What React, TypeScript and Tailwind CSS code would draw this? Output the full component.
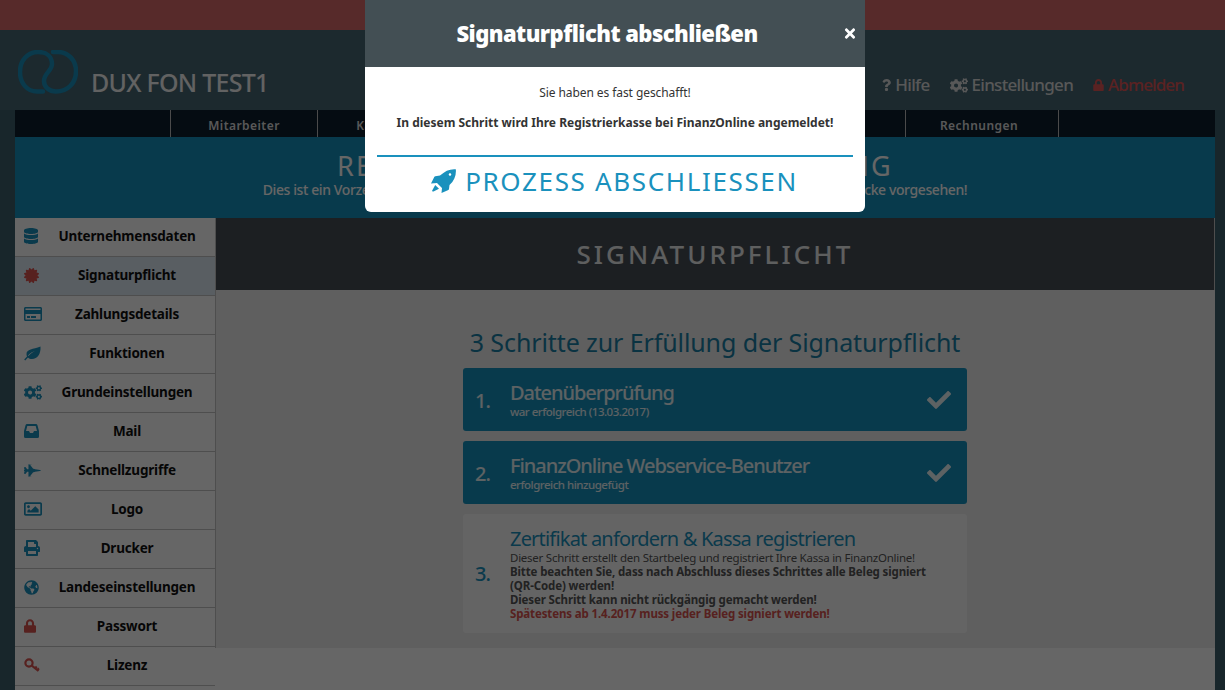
import React from 'react';
import {
  FaCertificate, FaCheck, FaCogs, FaDatabase, FaFighterJet, FaGlobeAmericas, FaLock, FaPrint, FaQuestion,
  FaRegCreditCard, FaRegImage, FaTimes,
} from 'react-icons/fa';

const KeyIcon = ({ className }: { className?: string }) => (
  <svg viewBox="0 0 16 15" className={className} fill="none" stroke="currentColor">
    <circle cx="5" cy="5" r="3.6" strokeWidth="2.2" />
    <path d="M7.8 7.6 L14.5 13 M11 10.2 L12.8 8.6 M13.2 12 L15 10.4" strokeWidth="2.2" />
  </svg>
);

const LeafIcon = ({ className }: { className?: string }) => (
  <svg viewBox="0 0 17 15" className={className} fill="currentColor" fillRule="evenodd">
    <path d="M16.5 .5 C17 8 13.5 13 8 13 C6.3 13 5 12.5 4 11.5 L1.2 14.6 L.2 13.6 L3 10.5 C2.6 9.5 2.5 9 2.5 8 C2.5 3 9 3.5 16.5 .5 Z M4.5 10 C7 7 9.5 5.5 13 4.5 C9.5 5 6 7 4 9.5 Z" />
  </svg>
);

const InboxIcon = ({ className }: { className?: string }) => (
  <svg viewBox="0 0 15 14" className={className} fill="currentColor" fillRule="evenodd">
    <path d="M3 0 H12 Q13 0 13.4 1 L15 7 V12.5 Q15 14 13.5 14 H1.5 Q0 14 0 12.5 V7 L1.6 1 Q2 0 3 0 Z M3.3 2 L2 7 H5 L6 9 H9 L10 7 H13 L11.7 2 Z" />
  </svg>
);

const RocketIcon = ({ className }: { className?: string }) => (
  <svg viewBox="0 0 25 24" className={className} fill="currentColor" fillRule="evenodd">
    <path d="M24.8 .2 C25.4 6 23.5 11.5 18.5 16 L18 20 Q17.9 20.6 17.4 20.9 L10.5 24 L11 19 L6 14 L0 14.5 L3.4 7.8 Q3.7 7.2 4.3 7.2 L9 6.6 C14 1.8 19 -.3 24.8 .2 Z M19 4.2 A1.3 1.3 0 1 0 19 6.8 A1.3 1.3 0 1 0 19 4.2 Z" />
    <path d="M4.2 16 L8 19.8 L2.5 22.5 Q.6 23 1.4 21.2 Z" />
  </svg>
);

const sidebar = [
  { label: 'Unternehmensdaten', icon: FaDatabase, cls: 'w-[14px] h-[16px] text-[#1a91bd]' },
  { label: 'Signaturpflicht', icon: FaCertificate, cls: 'w-[15px] h-[15px] text-[#d9534f]', active: true },
  { label: 'Zahlungsdetails', icon: FaRegCreditCard, cls: 'w-[18px] h-[16px] text-[#1a91bd]' },
  { label: 'Funktionen', icon: LeafIcon, cls: 'w-[17px] h-[15px] text-[#1a91bd]' },
  { label: 'Grundeinstellungen', icon: FaCogs, cls: 'w-[19px] h-[19px] text-[#1a91bd]' },
  { label: 'Mail', icon: InboxIcon, cls: 'w-[15px] h-[14px] text-[#1a91bd]' },
  { label: 'Schnellzugriffe', icon: FaFighterJet, cls: 'w-[17px] h-[17px] text-[#1a91bd]' },
  { label: 'Logo', icon: FaRegImage, cls: 'w-[18px] h-[18px] text-[#1a91bd]' },
  { label: 'Drucker', icon: FaPrint, cls: 'w-[16px] h-[16px] text-[#1a91bd]' },
  { label: 'Landeseinstellungen', icon: FaGlobeAmericas, cls: 'w-[15px] h-[15px] text-[#1a91bd]' },
  { label: 'Passwort', icon: FaLock, cls: 'w-[12px] h-[14px] text-[#d9534f]' },
  { label: 'Lizenz', icon: KeyIcon, cls: 'w-[16px] h-[15px] text-[#d9534f]' },
];

const topNav = ['Mitarbeiter', 'Kategorien', 'Artikel', 'Kunden', 'Berichte'];

const DoneStep = ({ n, title, sub }: { n: string; title: string; sub: string }) => (
  <div className="flex items-center h-[63px] bg-[#1691bd] rounded-[3px] text-white/90 pl-3 pr-4 mb-[10px]">
    <div className="w-[35px] text-[20px] font-medium tracking-[-1px] pt-[2px]">{n}</div>
    <div className="flex-1">
      <div className="text-[20px] leading-[24px] font-medium tracking-[-1.05px]">{title}</div>
      <div className="text-[11.5px] leading-[13px] font-medium tracking-[-0.5px]">{sub}</div>
    </div>
    <FaCheck className="w-[24px] h-[24px]" />
  </div>
);

const Logo = () => (
  <svg viewBox="0 0 60 44" className="w-[60px] h-[44px] text-[#1a91bd]" fill="none" stroke="currentColor" strokeWidth="4.5" strokeLinecap="round">
    <path d="M25 41.5 H19 C9 41.5 2 33 2 22 C2 10 10 2 20 2 C29 2 34 7 34 14 C34 21 26 23 26 31 C26 37 31 41.5 38 41.5 C50 41.5 58 33 58 21 C58 10 50 2 40 2 H35" />
  </svg>
);

export default function App() {
  return (
    <div className="relative h-[690px] overflow-hidden bg-[#3c5f6b] font-['Noto_Sans',sans-serif]">
      {/* page */}
      <div className="h-[30px] bg-[#d96a6a]" />
      <header className="flex items-end h-[80px] bg-[#466673] pl-[18px] pr-[41px] pb-[13px]">
        <div className="mb-[3px]"><Logo /></div>
        <div className="ml-[13px] text-[25px] leading-[30px] text-[#f4f4f4] tracking-[-0.75px] font-medium">DUX FON TEST1</div>
        <div className="ml-auto flex items-center gap-5 text-[17px] leading-[24px] font-medium tracking-[-0.7px]">
          <span className="flex items-center gap-1 text-[#dddddd]"><FaQuestion className="w-[9px] h-[12px]" />Hilfe</span>
          <span className="flex items-center gap-1 text-[#dddddd]"><FaCogs className="w-[18px] h-[15px]" />Einstellungen</span>
          <span className="flex items-center gap-1 text-[#e05555] tracking-[-0.9px]"><FaLock className="w-[11px] h-[12px]" />Abmelden</span>
        </div>
      </header>

      <div className="w-[1200px] ml-[15px]">
        <nav className="flex h-[27px] bg-[#0d1e2f] pl-[155px] text-[12px] leading-[31px] font-semibold tracking-[0.45px] text-[#dddddd]">
          {topNav.map((item) => (
            <div key={item} className="w-[147px] text-center border-l border-[#bbbbbb]">{item}</div>
          ))}
          <div className="w-[154px] pr-[6px] text-center border-x border-[#bbbbbb]">Rechnungen</div>
        </nav>

        <div className="h-[81px] bg-[#1691bd] text-center text-white pt-[14px]">
          <div className="text-[27px] leading-[30px] tracking-[2.25px]">REGISTRIERKASSEN - TESTUMGEBUNG</div>
          <div className="text-[14px] leading-[18px] font-medium tracking-[-0.4px]">Dies ist ein Vorzeigesystem! Alle Daten hier sind fiktiv und nur für Test- und Demonstrationszwecke vorgesehen!</div>
        </div>

        <div className="flex h-[472px] bg-white">
          <aside className="w-[200px] shrink-0">
            {sidebar.map(({ label, icon: Icon, cls, active }) => (
              <div key={label} className={`flex items-center h-[39px] border-b border-[#c4c4c4] pl-[9px] pr-[3px] pb-[2px] ${active ? 'bg-[#dfeaf6]' : ''}`}>
                <div className="w-[18px] flex justify-start"><Icon className={cls} /></div>
                <div className="flex-1 text-center text-[13.5px] font-bold text-[#111111] tracking-[-0.2px]">{label}</div>
              </div>
            ))}
          </aside>

          <main className="flex-1">
            <div className="h-[72px] bg-[#464e55] border-l border-r border-[#c4c4c4] flex items-center justify-center text-[26px] font-medium tracking-[3.05px] text-white/90">SIGNATURPFLICHT</div>
            <div className="h-[358px] bg-[#ededed] border-l border-[#c4c4c4] pt-[37px] pl-[247px]">
              <div className="w-[504px]">
                <h2 className="text-center text-[25px] leading-[30px] text-[#1a7fa6] mb-[11px] -tracking-[0.1px] whitespace-nowrap">3 Schritte zur Erfüllung der Signaturpflicht</h2>
                <DoneStep n="1." title="Datenüberprüfung" sub="war erfolgreich (13.03.2017)" />
                <DoneStep n="2." title="FinanzOnline Webservice-Benutzer" sub="erfolgreich hinzugefügt" />
                <div className="flex items-center h-[119px] bg-[#fafafa] rounded-[3px] pl-3 pr-3 pt-[1px]">
                  <div className="w-[35px] text-[20px] font-medium tracking-[-1px] text-[#1a91bd]">3.</div>
                  <div className="flex-1">
                    <div className="text-[20px] leading-[22px] text-[#1a91bd] tracking-[-0.8px] mb-[1px]">Zertifikat anfordern &amp; Kassa registrieren</div>
                    <div className="text-[11.5px] leading-[14px] text-[#555555] tracking-[-0.25px]">
                      Dieser Schritt erstellt den Startbeleg und registriert Ihre Kassa in FinanzOnline!
                      <br />
                      <b className="tracking-[-0.13px]">Bitte beachten Sie, dass nach Abschluss dieses Schrittes alle Beleg signiert <span className="whitespace-nowrap">(QR-Code)</span> werden!</b>
                      <br />
                      <b className="tracking-[-0.13px]">Dieser Schritt kann nicht rückgängig gemacht werden!</b>
                      <br />
                      <b className="tracking-[-0.13px] text-[#d9534f]">Spätestens ab 1.4.2017 muss jeder Beleg signiert werden!</b>
                    </div>
                  </div>
                </div>
              </div>
            </div>
          </main>
        </div>
      </div>

      {/* backdrop */}
      <div className="absolute inset-0 bg-black/60" />

      {/* dialog */}
      <div className="absolute top-0 left-[365px] w-[500px] h-[212px] bg-white rounded-b-[6px] overflow-hidden">
        <div className="relative h-[67px] bg-[#434f54] flex items-center justify-center pr-[16px] text-white text-[22px] font-black tracking-[-0.55px]">
          Signaturpflicht abschließen
          <FaTimes className="absolute right-[8px] top-[26px] w-[14px] h-[15px]" />
        </div>
        <div className="pt-[17px] text-center text-[#333333] text-[12px] leading-[18px]">
          <p className="mb-[12px] tracking-[-0.08px]">Sie haben es fast geschafft!</p>
          <p className="font-bold">In diesem Schritt wird Ihre Registrierkasse bei FinanzOnline angemeldet!</p>
        </div>
        <div className="mx-[12px] mt-[23px] border-t-2 border-[#1a91bd] pt-[7px] flex items-center justify-center gap-[9px] text-[#1a91bd] text-[26px] leading-[34px] tracking-[1.65px]">
          <RocketIcon className="w-[25px] h-[24px] -ml-[1px]" />
          PROZESS ABSCHLIESSEN
        </div>
      </div>
    </div>
  );
}
